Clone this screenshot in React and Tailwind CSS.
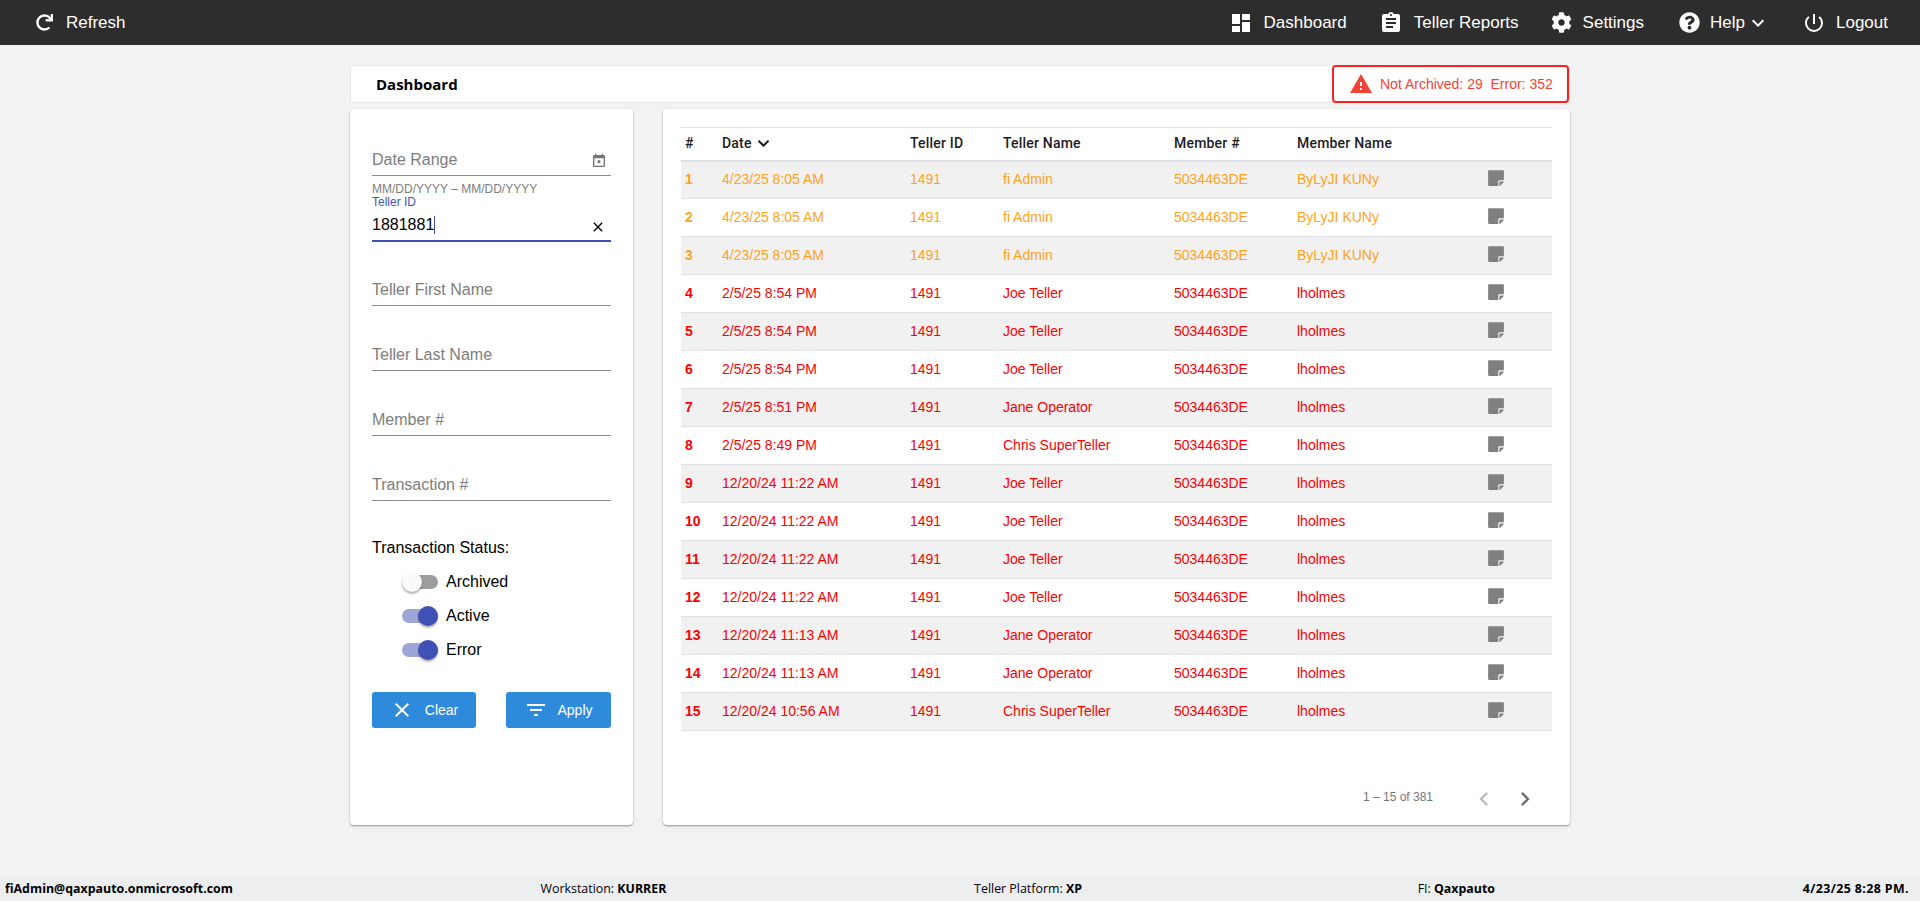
import React from 'react';
import { FaRedo, FaCog, FaQuestionCircle, FaStickyNote, FaChevronDown } from 'react-icons/fa';
import {
  MdDashboard,
  MdAssignment,
  MdPowerSettingsNew,
  MdExpandMore,
  MdWarning,
  MdClose,
  MdFilterList,
  MdChevronLeft,
  MdChevronRight,
} from 'react-icons/md';

const rows = [
  ['4/23/25 8:05 AM', 'fi Admin', 'ByLyJI KUNy', 'warn'],
  ['4/23/25 8:05 AM', 'fi Admin', 'ByLyJI KUNy', 'warn'],
  ['4/23/25 8:05 AM', 'fi Admin', 'ByLyJI KUNy', 'warn'],
  ['2/5/25 8:54 PM', 'Joe Teller', 'lholmes'],
  ['2/5/25 8:54 PM', 'Joe Teller', 'lholmes'],
  ['2/5/25 8:54 PM', 'Joe Teller', 'lholmes'],
  ['2/5/25 8:51 PM', 'Jane Operator', 'lholmes'],
  ['2/5/25 8:49 PM', 'Chris SuperTeller', 'lholmes'],
  ['12/20/24 11:22 AM', 'Joe Teller', 'lholmes'],
  ['12/20/24 11:22 AM', 'Joe Teller', 'lholmes'],
  ['12/20/24 11:22 AM', 'Joe Teller', 'lholmes'],
  ['12/20/24 11:22 AM', 'Joe Teller', 'lholmes'],
  ['12/20/24 11:13 AM', 'Jane Operator', 'lholmes'],
  ['12/20/24 11:13 AM', 'Jane Operator', 'lholmes'],
  ['12/20/24 10:56 AM', 'Chris SuperTeller', 'lholmes'],
];

const NavItem = ({ icon: Icon, label, size = 24, className = '', children }) => (
  <div className={`flex items-center text-white text-[17px] ${className}`}>
    <Icon size={size} className="shrink-0" />
    <span className="flex items-center">
      {label}
      {children}
    </span>
  </div>
);

const Field = ({ label }) => (
  <div className="h-[65px] flex flex-col justify-end">
    <div className="h-[34px] pt-[3px] border-b border-[#8c8c8c] text-[16px] text-[#7d7d7d] leading-[30px]">{label}</div>
  </div>
);

const Toggle = ({ label, on }) => (
  <div className="flex items-center h-[34px] pl-[30px]">
    <div className={`relative w-[36px] h-[14px] rounded-full ${on ? 'bg-[#9ea6d9]' : 'bg-[#9e9e9e]'}`}>
      <div
        className={`absolute top-[-3px] w-[20px] h-[20px] rounded-full shadow-[0_2px_2px_rgba(0,0,0,0.3)] ${
          on ? 'right-0 bg-[#3f51b5]' : 'left-0 bg-[#fafafa]'
        }`}
      />
    </div>
    <span className="ml-[8px] text-[16px] text-black">{label}</span>
  </div>
);

export default function App() {
  return (
    <div className="h-[901px] flex flex-col bg-[#f2f2f2] font-['Liberation_Sans',Arial,sans-serif] overflow-hidden">
      {/* Top nav */}
      <nav className="h-[45px] shrink-0 bg-[#2d2d2d] flex items-center justify-between pl-[36px] pr-[32px]">
        <div className="flex items-center gap-[13px] text-white text-[17px]">
          <FaRedo size={17} />
          <span>Refresh</span>
        </div>
        <div className="flex items-center">
          <NavItem icon={MdDashboard} label="Dashboard" className="gap-[11px]" />
          <NavItem icon={MdAssignment} label="Teller Reports" className="ml-[32px] gap-[11px]" />
          <NavItem icon={FaCog} size={21} label="Settings" className="ml-[32px] gap-[11px]" />
          <NavItem icon={FaQuestionCircle} size={21} label="Help" className="ml-[35px] gap-[10px]">
            <MdExpandMore size={24} className="ml-[1px]" />
          </NavItem>
          <NavItem icon={MdPowerSettingsNew} label="Logout" className="ml-[32px] gap-[10px]" />
        </div>
      </nav>

      <main className="flex-1 w-[1220px] mx-auto pt-[20px]">
        {/* Title bar */}
        <div className="h-[38px] bg-white rounded-[3px] border border-[#e4e4e4] flex items-center justify-between">
          <span className="ml-[25px] pt-[1px] font-['Open_Sans',sans-serif] font-bold text-[15px] text-black">Dashboard</span>
          <div className="h-[38px] w-[237px] border-2 border-[#ff2020] rounded-[4px] bg-white flex items-center pl-[15px]">
            <MdWarning size={24} className="text-[#f44336]" />
            <span className="ml-[7px] text-[14px] text-[#f44336] whitespace-pre">Not Archived: 29  Error: 352</span>
          </div>
        </div>

        <div className="flex gap-[30px] mt-[6px] h-[716px]">
          {/* Filters */}
          <aside className="w-[283px] bg-white rounded-[4px] shadow-[0_1px_2px_rgba(0,0,0,0.4)] px-[22px]">
            <div className="pt-[7px] h-[67px] flex flex-col justify-end">
              <div className="h-[34px] pt-[2px] border-b border-[#8c8c8c] flex items-center justify-between text-[16px] text-[#7d7d7d]">
                <span>Date Range</span>
                <svg width="16" height="16" viewBox="0 0 24 24" fill="#757575" className="mr-[4px] mt-[2px]">
                  <path d="M19 3h-1V1h-2v2H8V1H6v2H5c-1.11 0-1.99.9-1.99 2L3 19c0 1.1.89 2 2 2h14c1.1 0 2-.9 2-2V5c0-1.1-.9-2-2-2zm0 16H5V8h14v11zM10 11h4v4h-4z" />
                </svg>
              </div>
            </div>
            <div className="text-[12px] leading-[13px] text-[#7d7d7d] mt-[7px]">MM/DD/YYYY – MM/DD/YYYY</div>
            <div className="text-[12px] leading-[13px] text-[#3f51b5]">Teller ID</div>
            <div className="h-[33px] border-b-2 border-[#3f51b5] flex items-center justify-between text-[16px] text-black">
              <span className="flex items-center">
                1881881<span className="w-px h-[18px] bg-[#3f51b5]" />
              </span>
              <MdClose size={16} className="mr-[5px] mt-[4px]" />
            </div>
            <div className="-mt-[1px]">
              <Field label="Teller First Name" />
              <Field label="Teller Last Name" />
              <Field label="Member #" />
              <Field label="Transaction #" />
            </div>
            <div className="mt-[35px] text-[16px] text-black">Transaction Status:</div>
            <div className="mt-[5px]">
              <Toggle label="Archived" />
              <Toggle label="Active" on />
              <Toggle label="Error" on />
            </div>
            <div className="flex justify-between mt-[25px]">
              <button className="w-[104px] h-[36px] bg-[#2e8bdc] rounded-[3px] text-white text-[14px] flex items-center justify-center gap-[11px]">
                <MdClose size={24} />
                <span>Clear</span>
              </button>
              <button className="w-[105px] h-[36px] bg-[#2e8bdc] rounded-[3px] text-white text-[14px] flex items-center justify-center gap-[9px]">
                <MdFilterList size={24} />
                <span>Apply</span>
              </button>
            </div>
          </aside>

          {/* Table */}
          <section className="flex-1 bg-white rounded-[4px] shadow-[0_1px_2px_rgba(0,0,0,0.4)] pt-[18px] px-[18px] flex flex-col">
            <table className="w-full table-fixed border-collapse text-[14px]">
              <thead>
                <tr className="h-[33px] border-t border-b-2 border-t-[#e0e1e5] border-b-[#dfe1e6] text-left text-[#1c1c24] font-['Roboto',sans-serif] tracking-[0.2px]">
                  <th className="w-[41px] pl-[4px] font-medium">#</th>
                  <th className="w-[188px] font-medium">
                    <span className="flex items-center gap-[5px]">
                      Date
                      <FaChevronDown size={13} />
                    </span>
                  </th>
                  <th className="w-[93px] font-medium">Teller ID</th>
                  <th className="w-[171px] font-medium">Teller Name</th>
                  <th className="w-[123px] font-medium">Member #</th>
                  <th className="w-[191px] font-medium">Member Name</th>
                  <th />
                </tr>
              </thead>
              <tbody>
                {rows.map((r, i) => (
                  <tr
                    key={i}
                    className={`h-[38px] border-b border-[#dfe0e4] ${i % 2 === 0 ? 'bg-[#f1f1f2]' : 'bg-white'} ${
                      r[3] ? 'text-[#ffa31a]' : 'text-[#ff0000]'
                    }`}
                  >
                    <td className="pl-[4px] font-bold">{i + 1}</td>
                    <td>{r[0]}</td>
                    <td>1491</td>
                    <td>{r[1]}</td>
                    <td>5034463DE</td>
                    <td>{r[2]}</td>
                    <td>
                      <FaStickyNote size={18} className="text-[#808080] -ml-[1px] mb-[3px]" />
                    </td>
                  </tr>
                ))}
              </tbody>
            </table>
            <div className="flex items-center justify-end mt-[54px] text-[#757575]">
              <span className="text-[12px] mr-[37px] mb-[5px]">1 – 15 of 381</span>
              <MdChevronLeft size={28} className="text-[#bdbdbd]" />
              <MdChevronRight size={28} className="ml-[13px] mr-[13px] text-[#6f6f6f]" />
            </div>
          </section>
        </div>
      </main>

      {/* Status bar */}
      <footer className="h-[26px] shrink-0 pt-[3px] bg-[#eceef0] flex items-center justify-between pl-[5px] pr-[11px] font-['Open_Sans',sans-serif] text-[12.4px] text-black">
        <b className="font-bold">fiAdmin@qaxpauto.onmicrosoft.com</b>
        <span>Workstation: <b className="font-bold">KURRER</b></span>
        <span>Teller Platform: <b className="font-bold">XP</b></span>
        <span className="ml-[28px]">FI: <b className="font-bold">Qaxpauto</b></span>
        <b className="font-bold tracking-[0.4px]">4/23/25 8:28 PM.</b>
      </footer>
    </div>
  );
}
